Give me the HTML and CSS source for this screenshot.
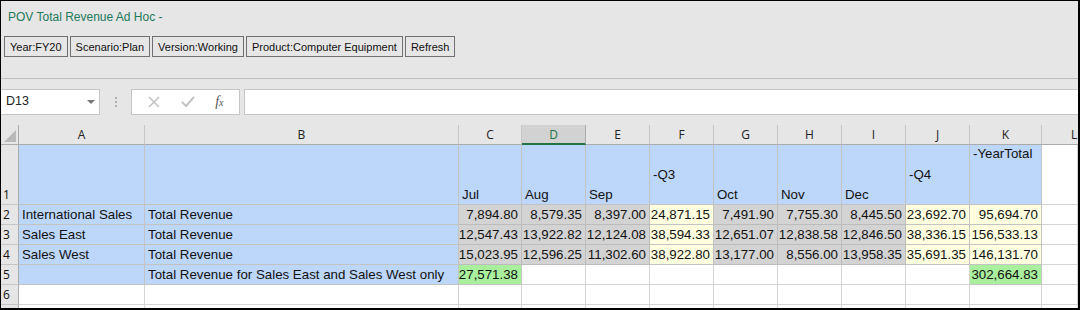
FILE: index.html
```html
<!DOCTYPE html>
<html lang="en">
<head>
    <meta charset="UTF-8">
    <title>POV Total Revenue Ad Hoc</title>
    <link rel="stylesheet" href="styles.css">
</head>
<body>
    <div class="frame">
        <div class="pov">
            <div class="pov-title">POV Total Revenue Ad Hoc -</div>
            <div class="pov-buttons">
                <button>Year:FY20</button>
                <button>Scenario:Plan</button>
                <button>Version:Working</button>
                <button>Product:Computer Equipment</button>
                <button>Refresh</button>
            </div>
        </div>

        <div class="formula-bar">
            <div class="name-box">D13<span class="arrow"></span></div>
            <div class="grip"><i></i><i></i><i></i></div>
            <div class="fx-buttons">
                <svg width="14" height="14" viewBox="0 0 14 14"><path d="M2 2 L12 12 M12 2 L2 12" stroke="#c4c4c4" stroke-width="1.6" fill="none"/></svg>
                <svg width="16" height="14" viewBox="0 0 16 14"><path d="M2 7 L6 11 L14 2" stroke="#c4c4c4" stroke-width="2" fill="none"/></svg>
                <span class="fx">f<sub>x</sub></span>
            </div>
            <div class="formula-input"></div>
        </div>

        <div class="sheet">
            <!-- column headers -->
            <div class="corner"><span></span></div>
            <div class="col">A</div>
            <div class="col">B</div>
            <div class="col">C</div>
            <div class="col active">D</div>
            <div class="col">E</div>
            <div class="col">F</div>
            <div class="col">G</div>
            <div class="col">H</div>
            <div class="col">I</div>
            <div class="col">J</div>
            <div class="col">K</div>
            <div class="col last">L</div>

            <!-- row 1 -->
            <div class="rh">1</div>
            <div class="c blue"></div>
            <div class="c blue"></div>
            <div class="c blue">Jul</div>
            <div class="c blue">Aug</div>
            <div class="c blue">Sep</div>
            <div class="c blue mid">-Q3</div>
            <div class="c blue">Oct</div>
            <div class="c blue">Nov</div>
            <div class="c blue">Dec</div>
            <div class="c blue mid">-Q4</div>
            <div class="c blue top">-YearTotal</div>
            <div class="c"></div>

            <!-- row 2 -->
            <div class="rh">2</div>
            <div class="c blue">International Sales</div>
            <div class="c blue">Total Revenue</div>
            <div class="c num gray">7,894.80</div>
            <div class="c num gray">8,579.35</div>
            <div class="c num gray">8,397.00</div>
            <div class="c num yellow">24,871.15</div>
            <div class="c num gray">7,491.90</div>
            <div class="c num gray">7,755.30</div>
            <div class="c num gray">8,445.50</div>
            <div class="c num yellow">23,692.70</div>
            <div class="c num yellow">95,694.70</div>
            <div class="c"></div>

            <!-- row 3 -->
            <div class="rh">3</div>
            <div class="c blue">Sales East</div>
            <div class="c blue">Total Revenue</div>
            <div class="c num gray">12,547.43</div>
            <div class="c num gray">13,922.82</div>
            <div class="c num gray">12,124.08</div>
            <div class="c num yellow">38,594.33</div>
            <div class="c num gray">12,651.07</div>
            <div class="c num gray">12,838.58</div>
            <div class="c num gray">12,846.50</div>
            <div class="c num yellow">38,336.15</div>
            <div class="c num yellow">156,533.13</div>
            <div class="c"></div>

            <!-- row 4 -->
            <div class="rh">4</div>
            <div class="c blue">Sales West</div>
            <div class="c blue">Total Revenue</div>
            <div class="c num gray">15,023.95</div>
            <div class="c num gray">12,596.25</div>
            <div class="c num gray">11,302.60</div>
            <div class="c num yellow">38,922.80</div>
            <div class="c num gray">13,177.00</div>
            <div class="c num gray">8,556.00</div>
            <div class="c num gray">13,958.35</div>
            <div class="c num yellow">35,691.35</div>
            <div class="c num yellow">146,131.70</div>
            <div class="c"></div>

            <!-- row 5 -->
            <div class="rh">5</div>
            <div class="c blue"></div>
            <div class="c blue">Total Revenue for Sales East and Sales West only</div>
            <div class="c num green">27,571.38</div>
            <div class="c"></div>
            <div class="c"></div>
            <div class="c"></div>
            <div class="c"></div>
            <div class="c"></div>
            <div class="c"></div>
            <div class="c"></div>
            <div class="c num green">302,664.83</div>
            <div class="c"></div>

            <!-- row 6 -->
            <div class="rh">6</div>
            <div class="c"></div><div class="c"></div><div class="c"></div><div class="c"></div>
            <div class="c"></div><div class="c"></div><div class="c"></div><div class="c"></div>
            <div class="c"></div><div class="c"></div><div class="c"></div><div class="c"></div>

            <!-- row 7 (cut off) -->
            <div class="rh"></div>
            <div class="c"></div><div class="c"></div><div class="c"></div><div class="c"></div>
            <div class="c"></div><div class="c"></div><div class="c"></div><div class="c"></div>
            <div class="c"></div><div class="c"></div><div class="c"></div><div class="c"></div>
        </div>
    </div>
</body>
</html>
```

FILE: styles.css
```css
* {
    box-sizing: border-box;
}
body {
    margin: 0;
    width: 1080px;
    height: 310px;
    overflow: hidden;
    background: #fff;
}
.frame {
    width: 1080px;
    height: 310px;
    border: 1px solid #000;
    border-right-width: 2px;
    border-bottom-width: 2px;
    background: #e6e6e6;
    overflow: hidden;
    font-family: "Liberation Sans", Arial, sans-serif;
}
.pov {
    height: 78px;
    padding: 9px 0 0 3px;
    border-bottom: 1px solid #bdbdbd;
    font-family: "Liberation Sans", Tahoma, sans-serif;
}
.pov-title {
    padding-left: 4px;
    font-size: 12px;
    color: #217a5b;
    height: 26px;
}
.pov-buttons {
    display: flex;
    gap: 2px;
}
.pov-buttons button {
    height: 21px;
    padding: 0 5px;
    margin: 0;
    font-family: "Liberation Sans", Tahoma, sans-serif;
    font-size: 11px;
    color: #111;
    background: #e6e6e6;
    border: 1px solid #707070;
    border-radius: 0;
}
.formula-bar {
    display: flex;
    align-items: stretch;
    height: 26px;
    margin: 10px 0 10px 0;
}
.name-box {
    width: 99px;
    background: #fff;
    border: 1px solid #c6c6c6;
    border-left: none;
    position: relative;
    padding: 4px 0 0 5px;
    font-size: 12.5px;
    color: #222;
}
.name-box .arrow {
    position: absolute;
    right: 4px;
    top: 10px;
    border-left: 4px solid transparent;
    border-right: 4px solid transparent;
    border-top: 4px solid #777;
}
.grip {
    width: 31px;
    display: flex;
    flex-direction: column;
    align-items: center;
    justify-content: center;
    gap: 2px;
}
.grip i {
    width: 2px;
    height: 2px;
    background: #b0b0b0;
}
.fx-buttons {
    width: 109px;
    background: #fff;
    border: 1px solid #c6c6c6;
    display: flex;
    align-items: center;
    justify-content: space-around;
    padding: 0 6px;
}
.fx {
    font-family: "Liberation Serif", serif;
    font-style: italic;
    font-size: 14px;
    color: #555;
}
.fx sub {
    font-size: 10px;
    vertical-align: 0;
}
.formula-input {
    flex: 1;
    margin-left: 4px;
    background: #fff;
    border: 1px solid #c6c6c6;
    border-right: none;
}
.sheet {
    display: grid;
    grid-template-columns: 18px 126px 314px 63px 64px 64px 64px 64px 64px 64px 64px 72px 1fr;
    grid-template-rows: 20px 60px 20px 20px 20px 20px 20px 20px;
    background: #fff;
    font-size: 13.3px;
    color: #111;
}
.corner {
    background: #e6e6e6;
    border-bottom: 1px solid #ababab;
    border-right: 1px solid #ababab;
    position: relative;
}
.corner span {
    position: absolute;
    right: 2px;
    bottom: 2px;
    border-left: 12px solid transparent;
    border-bottom: 12px solid #b9b9b9;
}
.col {
    background: #e6e6e6;
    border-bottom: 1px solid #ababab;
    border-right: 1px solid #c6c6c6;
    text-align: center;
    font-family: "Open Sans", sans-serif;
    font-size: 12px;
    line-height: 19px;
    color: #222;
}
.col.active {
    background: #d2d2d2;
    color: #217346;
    border-bottom: 2px solid #217346;
    border-right-color: #ababab;
}
.col.last {
    border-right: none;
    text-align: left;
    padding-left: 29px;
}
.rh {
    background: #e6e6e6;
    border-right: 1px solid #ababab;
    border-bottom: 1px solid #c6c6c6;
    font-family: "Open Sans", sans-serif;
    font-size: 12px;
    padding-left: 2px;
    display: flex;
    align-items: flex-end;
    line-height: 19px;
}
.c {
    border-right: 1px solid #d4d4d4;
    border-bottom: 1px solid #d4d4d4;
    padding: 0 3px;
    display: flex;
    align-items: flex-end;
    line-height: 18px;
    white-space: nowrap;
}
.c.num {
    justify-content: flex-end;
}
.c.top {
    align-items: flex-start;
}
.c.mid {
    align-items: center;
}
.blue {
    background: #bdd7fb;
    border-color: #c3c3c3;
}
.gray {
    background: #d3d3d3;
    border-color: #bcbcbc;
}
.yellow {
    background: #ffffe0;
    border-color: #c3c3c3;
}
.green {
    background: #aaef9e;
    border-color: #c3c3c3;
}
```
